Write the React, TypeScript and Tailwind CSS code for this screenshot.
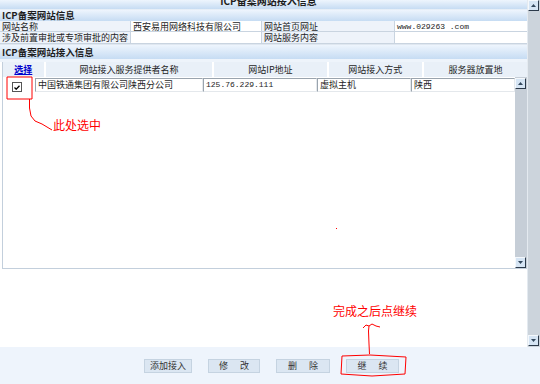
import React from "react";

const band = "bg-[linear-gradient(to_bottom,#eef5fd,#c6dcf3)]";

function ArrowBtn({ down }: { down?: boolean }) {
  return (
    <div className="w-[11px] h-[11px] bg-[#d6e5f4] border-r border-b border-[#2c3a4a] border-t border-l border-t-[#f4f8fc] border-l-[#f4f8fc] flex items-center justify-center">
      <svg width="5" height="3" viewBox="0 0 5 3">
        {down ? <path d="M0 0H5L2.5 3Z" fill="#34495e" /> : <path d="M0 3H5L2.5 0Z" fill="#34495e" />}
      </svg>
    </div>
  );
}

function Field({ w, children, mono }: { w: string; children?: React.ReactNode; mono?: boolean }) {
  return (
    <div
      className={`${w} h-[14px] bg-white border border-t-[#9aa4ae] border-l-[#9aa4ae] border-r-[#e4e8ec] border-b-[#e4e8ec] pl-[2px] leading-[12px] whitespace-nowrap overflow-hidden ${
        mono ? "font-['Liberation_Mono',monospace] text-[8px]" : "text-[9px]"
      }`}
    >
      {children}
    </div>
  );
}

function Btn({ w, children }: { w: string; children: React.ReactNode }) {
  return (
    <div className={`${w} h-[14px] bg-[#dbe6f2] border border-[#c5d3e1] flex items-center justify-center gap-[12px] text-[9px] leading-[12px] text-[#333]`}>
      {children}
    </div>
  );
}

const cell = "overflow-hidden whitespace-nowrap pl-[2px] border-b border-[#c9d4e0]";

export default function App() {
  return (
    <div className="relative w-[540px] h-[384px] overflow-hidden bg-white text-[#1e1e1e] font-['Noto_Sans_CJK_SC',sans-serif]">
      <div className="flex h-[347px]">
        <div className="w-[527px] flex flex-col">
          {/* title */}
          <div className={`h-[9px] overflow-hidden ${band} flex justify-center`}>
            <div className="-mt-[6px] pl-[10px] text-[10px] font-bold leading-[14px]">ICP备案网站接入信息</div>
          </div>
          <div className="h-[1px] bg-[#e6eef7]" />
          <div className={`h-[11px] overflow-hidden ${band} text-[9.5px] font-bold leading-[11px] pl-[2px]`}>ICP备案网站信息</div>
          {/* info table */}
          <div className="grid grid-cols-[131px_131px_133px_132px] text-[9px] leading-[11px]">
            <div className={`h-[11px] bg-[#eef3fa] border-r ${cell}`}>网站名称</div>
            <div className={`h-[11px] bg-white border-r ${cell}`}>西安易用网络科技有限公司</div>
            <div className={`h-[11px] bg-[#eef3fa] border-r ${cell}`}>网站首页网址</div>
            <div className={`h-[11px] bg-white ${cell} font-['Liberation_Mono',monospace] text-[8px]`}>www.029263 .com</div>
            <div className={`h-[12px] bg-[#eef3fa] border-r ${cell}`}>涉及前置审批或专项审批的内容</div>
            <div className={`h-[12px] bg-white border-r ${cell}`} />
            <div className={`h-[12px] bg-[#eef3fa] border-r ${cell}`}>网站服务内容</div>
            <div className={`h-[12px] bg-white ${cell}`} />
          </div>
          <div className="h-[1px] bg-[#dfe7f0]" />
          <div className={`h-[14px] overflow-hidden ${band} text-[9.5px] font-bold leading-[14px] pl-[2px]`}>ICP备案网站接入信息</div>
          <div className="h-[3px] bg-[#eef4fb]" />
          <div className="ml-[2px] border-l border-[#c3cfdc] flex flex-col">
            {/* header row */}
            <div className="flex h-[15px] text-[9px] leading-[15px] bg-white overflow-hidden">
              <div className="w-[41px] bg-[#e9f0f8] text-center text-[#0000cc] underline font-bold">选择</div>
              <div className="w-[168px] ml-[2px] bg-[#e9f0f8] text-center">网站接入服务提供者名称</div>
              <div className="w-[113px] ml-[2px] bg-[#e9f0f8] text-center">网站IP地址</div>
              <div className="w-[94px] ml-[2px] bg-[#e9f0f8] text-center">网站接入方式</div>
              <div className="w-[104px] ml-[2px] bg-[#e9f0f8] text-center">服务器放置地</div>
            </div>
            {/* list */}
            <div className="flex h-[192px] border-b border-[#c3cfdc]">
              <div className="w-[512px] bg-white pt-[1px]">
                <div className="flex h-[14px] items-start">
                  <div className="w-[32px] flex justify-start pl-[9px]">
                    <div className="w-[10px] h-[10px] mt-[4px] border border-[#555] bg-white flex items-center justify-center">
                      <svg width="6" height="5" viewBox="0 0 6 5">
                        <path d="M0.5 2.5 L2.2 4.2 L5.5 0.7" stroke="#000" strokeWidth="1.3" fill="none" />
                      </svg>
                    </div>
                  </div>
                  <Field w="w-[168px]">中国铁通集团有限公司陕西分公司</Field>
                  <Field w="w-[114px]" mono>125.76.229.111</Field>
                  <Field w="w-[94px]">虚拟主机</Field>
                  <Field w="w-[104px]">陕西</Field>
                </div>
              </div>
              <div className="w-[12px] bg-[#c6ced7] flex flex-col justify-between pt-[1px]">
                <ArrowBtn />
                <ArrowBtn down />
              </div>
            </div>
          </div>
          <div className="flex-1 bg-white" />
        </div>
        {/* outer scrollbar */}
        <div className="w-[1px] bg-[#e4eaf0]" />
        <div className="w-[12px] bg-[#ccd4dc] flex flex-col justify-between pb-[1px]">
          <ArrowBtn />
          <ArrowBtn down />
        </div>
      </div>
      {/* bottom bar */}
      <div className="h-[37px] bg-[#eef4fc] flex pl-[144px] pt-[12px] gap-[16px]">
        <Btn w="w-[48px]">添加接入</Btn>
        <Btn w="w-[52px]"><span>修</span><span>改</span></Btn>
        <Btn w="w-[54px]"><span>删</span><span>除</span></Btn>
        <Btn w="w-[53px]"><span>继</span><span>续</span></Btn>
      </div>

      {/* annotations */}
      <svg className="absolute left-0 top-0 pointer-events-none" width="540" height="384" viewBox="0 0 540 384">
        <path d="M7 77 L32 77 L32 99 L7 99 Z" stroke="#f00" strokeWidth="1" fill="none" />
        <path d="M29.5 99 L29.5 108 L31 116 L35 121 L42 124 L47 127 L52 130" stroke="#f00" strokeWidth="1" fill="none" />
        <path d="M342 356 L370 355 L406 357 L405 374 L372 376 L341 374 Z" stroke="#f00" strokeWidth="1" fill="none" />
        <path d="M369.5 354 L369 344 L368.5 331 L369 326" stroke="#f00" strokeWidth="1" fill="none" />
        <path d="M363 328 L366 325 L369 326 L372 324 L376 326 L380 327" stroke="#f00" strokeWidth="1" fill="none" />
        <rect x="336" y="228" width="1" height="1" fill="#f00" />
      </svg>
      <div className="absolute left-[53px] top-[117px] text-[12px] leading-[16px] text-[#f00] pointer-events-none">此处选中</div>
      <div className="absolute left-[333px] top-[303px] text-[12px] leading-[16px] text-[#f00] pointer-events-none">完成之后点继续</div>
    </div>
  );
}
